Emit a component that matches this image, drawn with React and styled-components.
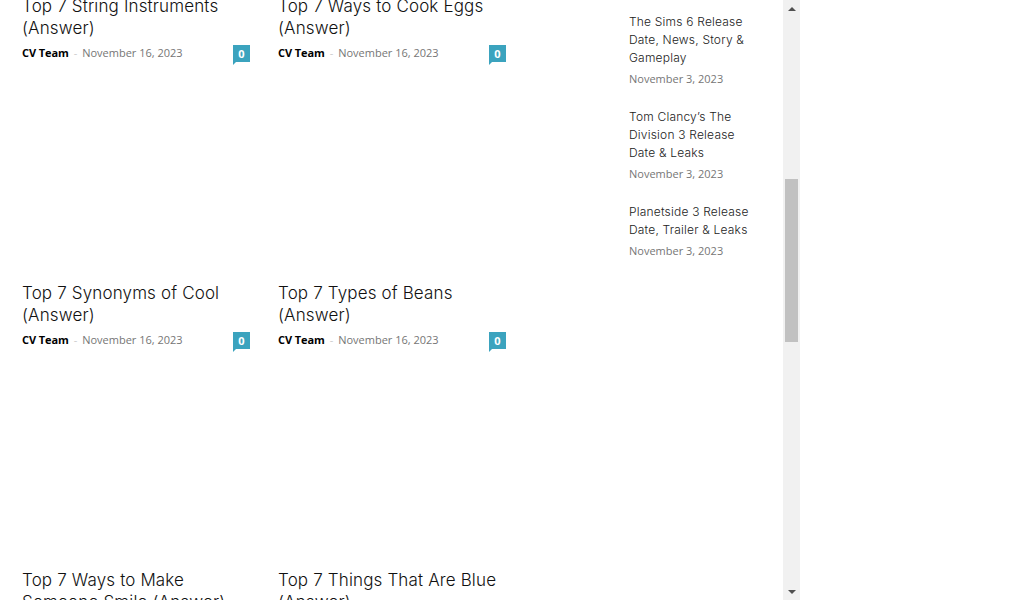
import React from 'react';
import styled, { createGlobalStyle } from 'styled-components';

const GlobalStyle = createGlobalStyle`
  html, body {
    margin: 0;
    height: 600px;
    overflow: hidden;
    background: #fff;
  }
`;

const Frame = styled.div`
  width: 800px;
  height: 600px;
  display: flex;
  overflow: hidden;
`;

const Page = styled.div`
  flex: 1;
  display: flex;
  overflow: hidden;
  padding-left: 22px;
`;

const Main = styled.main`
  width: 484px;
  flex: none;
  margin-top: -5px;
  display: grid;
  grid-template-columns: 228px 228px;
  grid-auto-rows: 287px;
  column-gap: 28px;
  align-content: start;
`;

const Module = styled.article`
  display: flex;
  flex-direction: column;
`;

const Title = styled.h3`
  margin: 0 0 2px;
  font: 350 17px/22px Inter, "Liberation Sans", sans-serif;
  letter-spacing: 0.15px;
  color: #111;
`;

const Meta = styled.div`
  display: flex;
  align-items: flex-start;
  font: 400 11px/20px "Open Sans", sans-serif;
  padding-top: 2px;
`;

const Author = styled.span`
  font-weight: 700;
  letter-spacing: -0.1px;
  color: #000;
`;

const Dash = styled.span`
  color: #ccc;
  margin: 0 5px;
`;

const DateText = styled.span`
  color: #767676;
`;

const Badge = styled.span`
  position: relative;
  margin-left: auto;
  margin-top: 2px;
  width: 17px;
  height: 17px;
  background: #3ba3be;
  color: #fff;
  font: 700 11px/17px "Open Sans", sans-serif;
  text-align: center;

  &::after {
    content: '';
    position: absolute;
    left: 0;
    bottom: -3px;
    border-top: 3px solid #3ba3be;
    border-right: 3px solid transparent;
  }
`;

const Sidebar = styled.aside`
  width: 132px;
  margin-left: 123px;
  padding-top: 13px;
  display: flex;
  flex-direction: column;
  gap: 20px;
`;

const SideItem = styled.div`
  display: flex;
  flex-direction: column;
  gap: 3px;
`;

const SideTitle = styled.div`
  font: 300 12px/18px Inter, "Liberation Sans", sans-serif;
  letter-spacing: 0.2px;
  color: #222;
`;

const SideDate = styled.div`
  font: 400 11px/18px "Open Sans", sans-serif;
  color: #767676;
`;

const Scrollbar = styled.div`
  width: 17px;
  height: 600px;
  flex: none;
  background: #f1f1f1;
  display: flex;
  flex-direction: column;
`;

const ScrollButton = styled.div`
  height: 17px;
  flex: none;
  display: flex;
  align-items: center;
  justify-content: center;

  &::before {
    content: '';
    border-left: 4px solid transparent;
    border-right: 4px solid transparent;
    ${(p) => (p.$down ? 'border-top: 4px solid #505050;' : 'border-bottom: 4px solid #505050;')}
  }
`;

const Track = styled.div`
  flex: 1;
  padding: 162px 2px 0;
`;

const Thumb = styled.div`
  height: 163px;
  background: #c1c1c1;
`;

const posts = [
  ['Top 7 String Instruments (Answer)', 'Top 7 Ways to Cook Eggs (Answer)'],
  ['Top 7 Synonyms of Cool (Answer)', 'Top 7 Types of Beans (Answer)'],
  ['Top 7 Ways to Make Someone Smile (Answer)', 'Top 7 Things That Are Blue (Answer)'],
].flat();

const sidePosts = [
  'The Sims 6 Release Date, News, Story & Gameplay',
  'Tom Clancy’s The Division 3 Release Date & Leaks',
  'Planetside 3 Release Date, Trailer & Leaks',
];

export default function App() {
  return (
    <>
      <GlobalStyle />
      <Frame>
        <Page>
          <Main>
            {posts.map((title) => (
              <Module key={title}>
                <Title>{title}</Title>
                <Meta>
                  <Author>CV Team</Author>
                  <Dash>-</Dash>
                  <DateText>November 16, 2023</DateText>
                  <Badge>0</Badge>
                </Meta>
              </Module>
            ))}
          </Main>
          <Sidebar>
            {sidePosts.map((title) => (
              <SideItem key={title}>
                <SideTitle>{title}</SideTitle>
                <SideDate>November 3, 2023</SideDate>
              </SideItem>
            ))}
          </Sidebar>
        </Page>
        <Scrollbar>
          <ScrollButton />
          <Track>
            <Thumb />
          </Track>
          <ScrollButton $down />
        </Scrollbar>
      </Frame>
    </>
  );
}
